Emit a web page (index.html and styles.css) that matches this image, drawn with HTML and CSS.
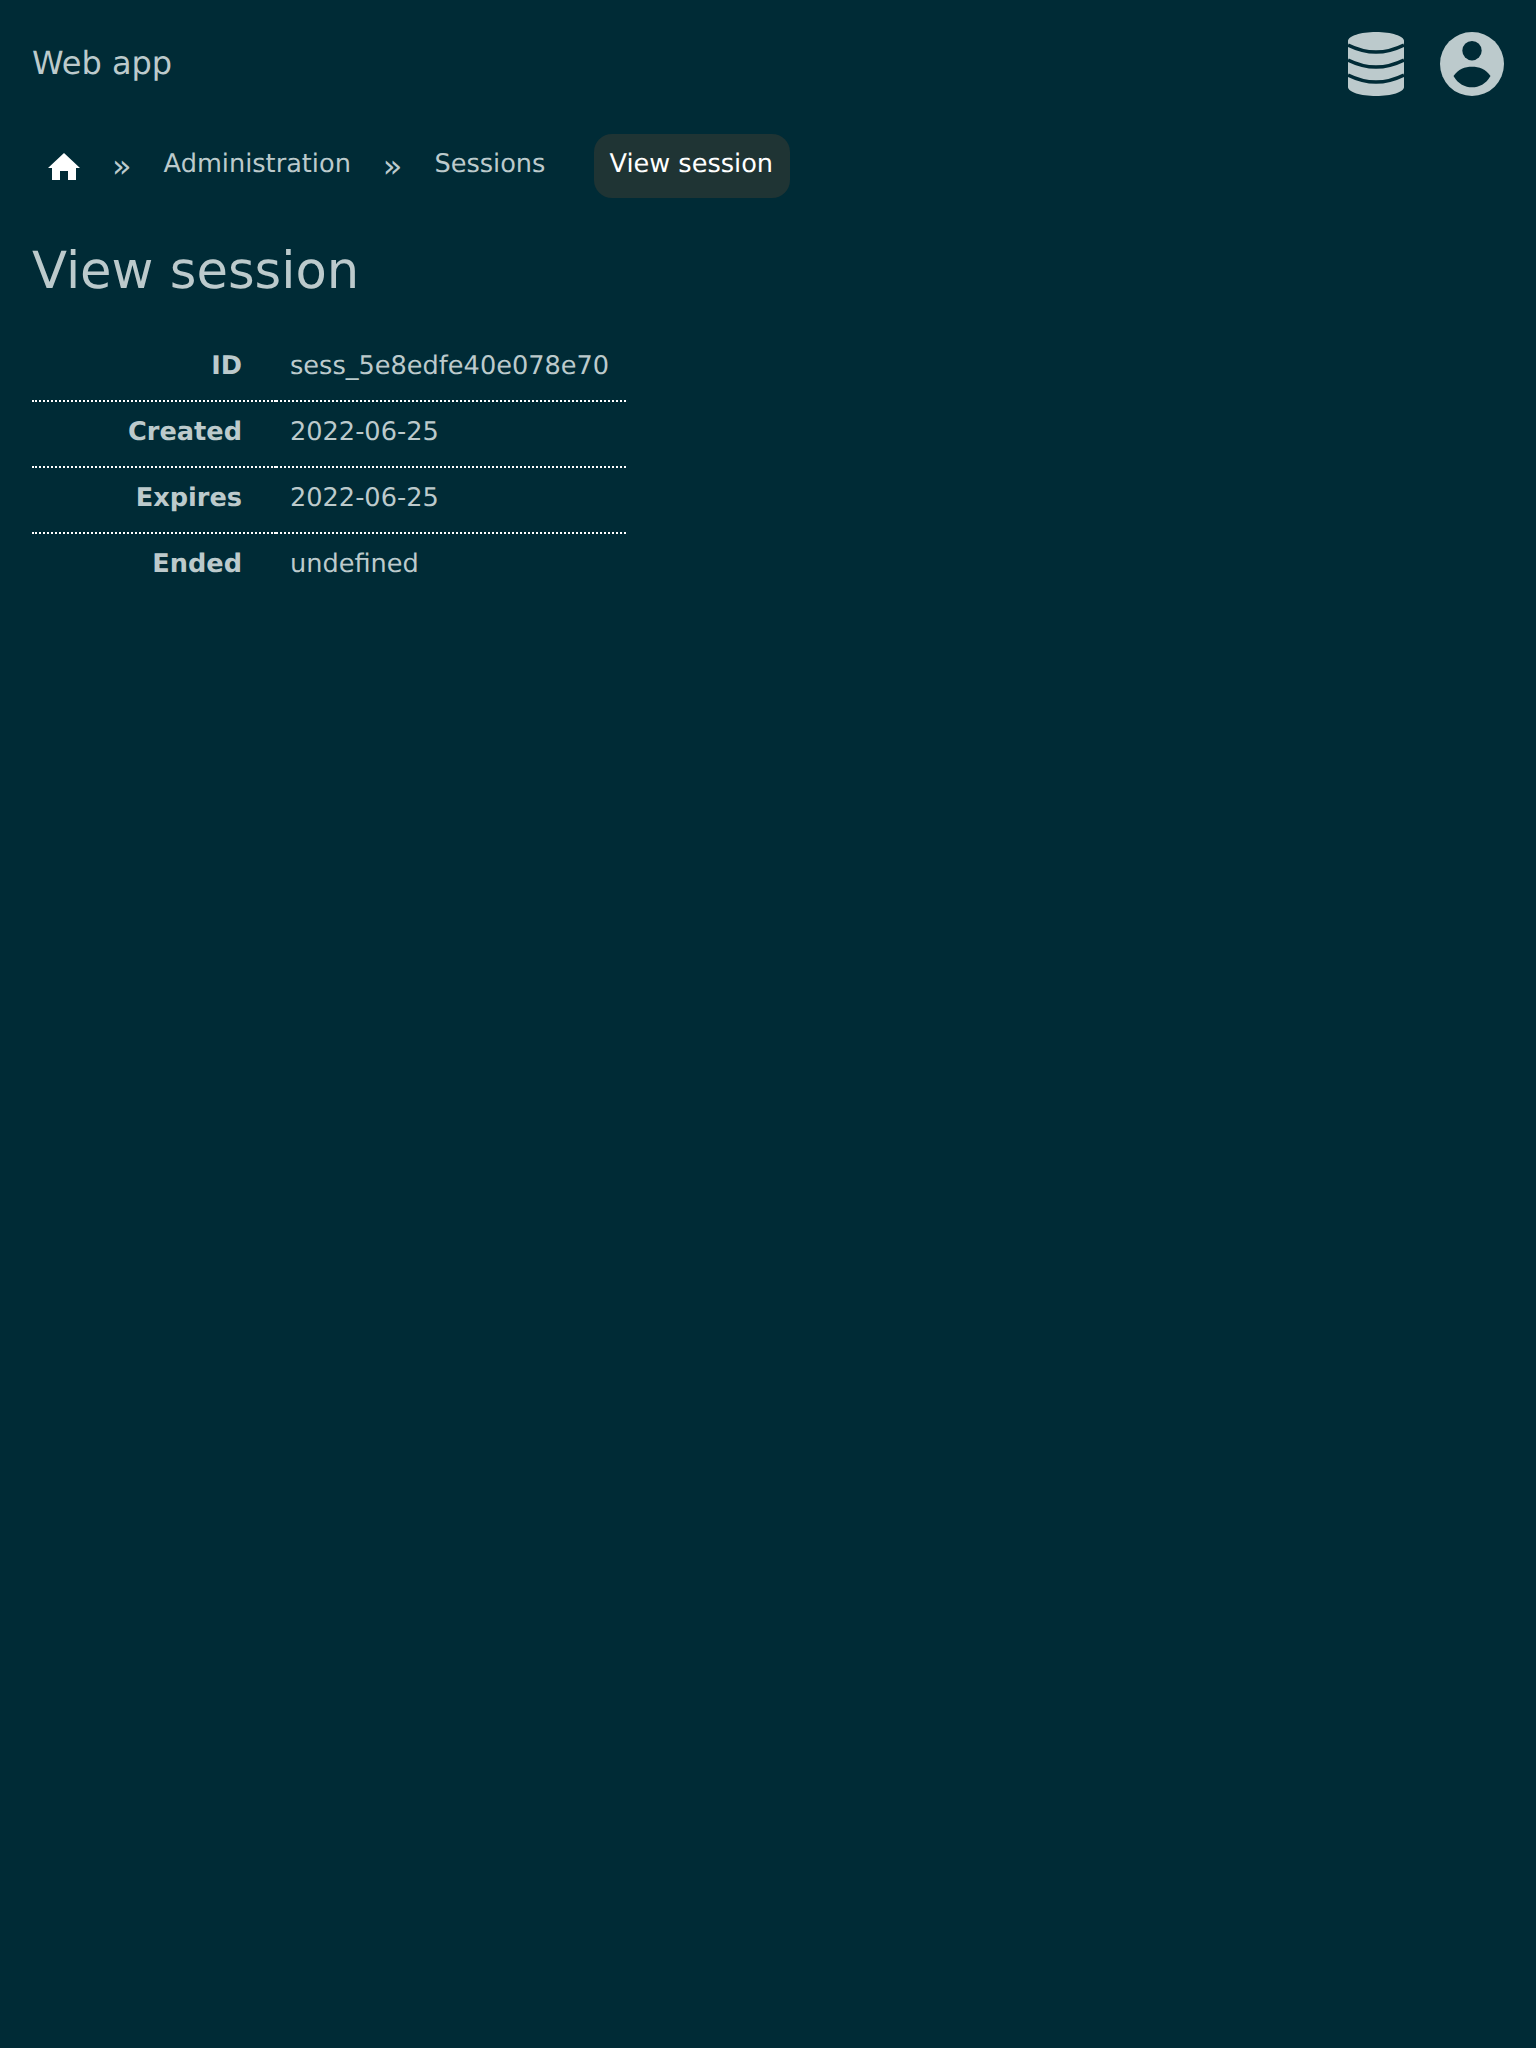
FILE: index.html
```html
<!DOCTYPE html>
<html>
<head>
    <title>View session</title>
    <link rel="stylesheet" href="styles.css">
</head>
<body>
    <header class="topbar">
        <a class="brand" href="#">Web app</a>
        <nav class="topbar-icons">
            <a href="#" class="db-icon">
                <svg width="56" height="64" viewBox="0 0 56 64">
                    <path class="fill" d="M0 9C0 4 12.500 0 28 0s28 4 28 9v46c0 5-12.500 9-28 9S0 60 0 55z"/>
                    <path class="cut" d="M0 13q28 14 56 0M0 28q28 14 56 0M0 43q28 14 56 0"/>
                </svg>
            </a>
            <a href="#" class="user-icon">
                <svg width="64" height="64" viewBox="0 0 64 64">
                    <circle class="fill" cx="32" cy="32" r="32"/>
                    <circle class="hole" cx="32" cy="18.700" r="9.700"/>
                    <path class="hole" d="M13.500 44C18 37 25 34.700 32 34.700S46 37 50.500 44C46 52 39 55.300 32 55.300S18 52 13.500 44z"/>
                </svg>
            </a>
        </nav>
    </header>

    <ul class="breadcrumbs">
        <li class="crumb">
            <a href="#" class="home-link">
                <svg width="32" height="27" viewBox="0 0 32 27">
                    <path d="M16 0 32 15H28V27H20V18H12V27H4V15H0z"/>
                </svg>
            </a>
        </li>
        <li class="sep">»</li>
        <li class="crumb"><a href="#">Administration</a></li>
        <li class="sep">»</li>
        <li class="crumb"><a href="#">Sessions</a></li>
        <li class="crumb current">View session</li>
    </ul>

    <main class="content">
        <h1>View session</h1>
        <table class="details">
            <tr>
                <th>ID</th>
                <td>sess_5e8edfe40e078e70</td>
            </tr>
            <tr>
                <th>Created</th>
                <td>2022-06-25</td>
            </tr>
            <tr>
                <th>Expires</th>
                <td>2022-06-25</td>
            </tr>
            <tr>
                <th>Ended</th>
                <td>undefined</td>
            </tr>
        </table>
    </main>
</body>
</html>
```

FILE: styles.css
```css
body {
    margin: 0;
    min-height: 2048px;
    background-color: #002b36;
    color: #bccacc;
    font-family: "DejaVu Sans", sans-serif;
    font-size: 25.6px;
    text-rendering: geometricPrecision;
}

a {
    color: inherit;
    text-decoration: none;
}

.topbar {
    display: flex;
    justify-content: space-between;
    align-items: center;
    padding: 32px;
}

.brand {
    margin-top: -2px;
    font-size: 32px;
}

.topbar-icons {
    display: flex;
    gap: 36px;
}

.topbar-icons a {
    display: block;
    height: 64px;
}

.fill {
    fill: #bccacc;
}

.hole {
    fill: #002b36;
}

.cut {
    fill: none;
    stroke: #002b36;
    stroke-width: 3.500;
}

.breadcrumbs {
    display: flex;
    align-items: center;
    list-style: none;
    margin: 6px 0 0;
    padding: 0 0 0 32px;
}

.crumb {
    padding: 11px 16px 15px;
    line-height: 38px;
}

.home-link {
    display: block;
    height: 38px;
    padding-top: 8px;
    box-sizing: border-box;
}

.home-link svg {
    display: block;
    fill: #fff;
}

.sep {
    padding: 0 16px;
    font-size: 32px;
    line-height: 64px;
}

.current {
    margin-left: 33px;
    padding-left: 15px;
    padding-right: 17px;
    background-color: #1f3434;
    border-radius: 18px;
    color: #fff;
}

.content {
    padding: 0 32px;
}

h1 {
    margin: 43px 0 35px;
    font-size: 51.200px;
    font-weight: normal;
    line-height: 60px;
}

.details {
    border-collapse: collapse;
    width: 594px;
}

.details th,
.details td {
    height: 60px;
    padding: 0 0 4px;
    border-bottom: 2px dotted #fff;
    font-weight: normal;
}

.details tr:last-child th,
.details tr:last-child td {
    border-bottom: none;
}

.details th {
    width: 210px;
    padding-right: 34px;
    font-weight: bold;
    text-align: right;
}

.details td {
    padding-left: 14px;
}
```
